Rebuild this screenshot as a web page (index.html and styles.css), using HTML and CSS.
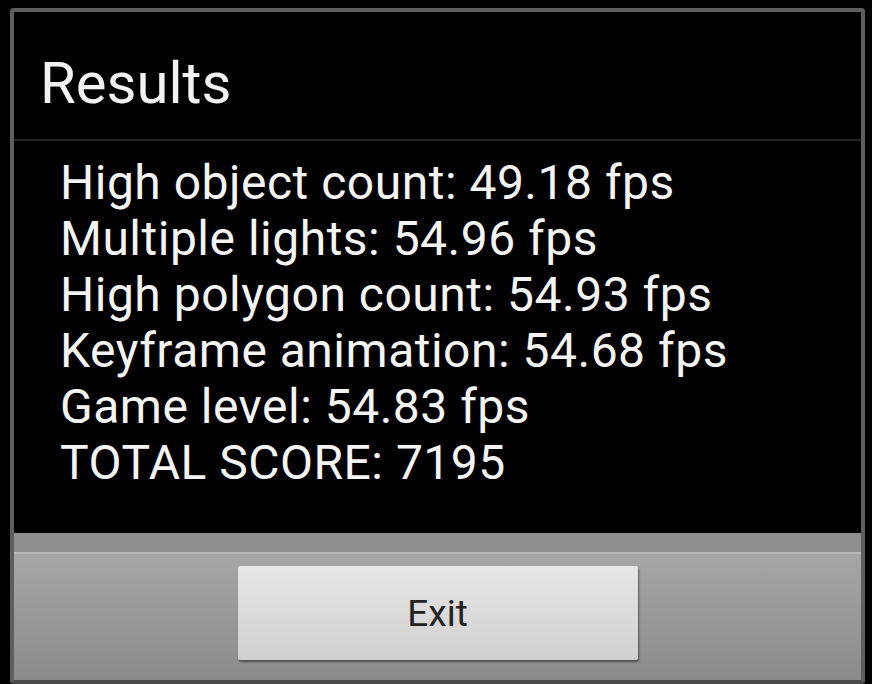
FILE: index.html
```html
<!DOCTYPE html>
<html lang="en">

<head>
    <link rel="stylesheet" href="styles.css">
</head>

<body>
    <div class="dialog">
        <div class="title">Results</div>
        <div class="results">
            <p>High object count: 49.18 fps</p>
            <p>Multiple lights: 54.96 fps</p>
            <p>High polygon count: 54.93 fps</p>
            <p>Keyframe animation: 54.68 fps</p>
            <p>Game level: 54.83 fps</p>
            <p>TOTAL SCORE: 7195</p>
        </div>
        <div class="button-bar">
            <button class="exit">Exit</button>
        </div>
    </div>
</body>

</html>
```
FILE: styles.css
```css
body {
    font-family: Roboto, "Liberation Sans", sans-serif;
    margin: 0;
    padding: 0;
    background-color: black;
    height: 684px;
    overflow: hidden;
}

.dialog {
    width: 847px;
    height: 668px;
    margin: 8px 0 0 10px;
    border: 4px solid #5e5e5e;
    border-bottom-color: #4a4a4a;
    border-radius: 4px;
    display: flex;
    flex-direction: column;
    background: black;
}

.title {
    height: 129px;
    padding-left: 26px;
    color: #f2f2f2;
    font-size: 58px;
    line-height: 142px;
    border-bottom: 2px solid #262626;
    box-sizing: border-box;
    flex: none;
}

.results {
    height: 392px;
    padding: 14px 0 0 46px;
    box-sizing: border-box;
    color: #f4f4f4;
    font-size: 48px;
    letter-spacing: 0.5px;
    flex: none;
}

.results p {
    margin: 0;
    line-height: 56px;
    white-space: nowrap;
}

.button-bar {
    flex: 1;
    background: linear-gradient(#8f8f8f 0, #8f8f8f 19px, #b8b8b8 19px, #b8b8b8 21px, #a6a6a6 21px, #8b8b8b 100%);
    display: flex;
    justify-content: center;
    padding-top: 33px;
    box-sizing: border-box;
}

.exit {
    width: 400px;
    height: 94px;
    border: none;
    border-radius: 2px;
    background: linear-gradient(#e6e6e6, #d0d0d0);
    box-shadow: 1px 2px 2px rgba(0, 0, 0, 0.45);
    color: #222;
    font-family: Roboto, "Liberation Sans", sans-serif;
    font-size: 37px;
    padding: 0;
}
```
